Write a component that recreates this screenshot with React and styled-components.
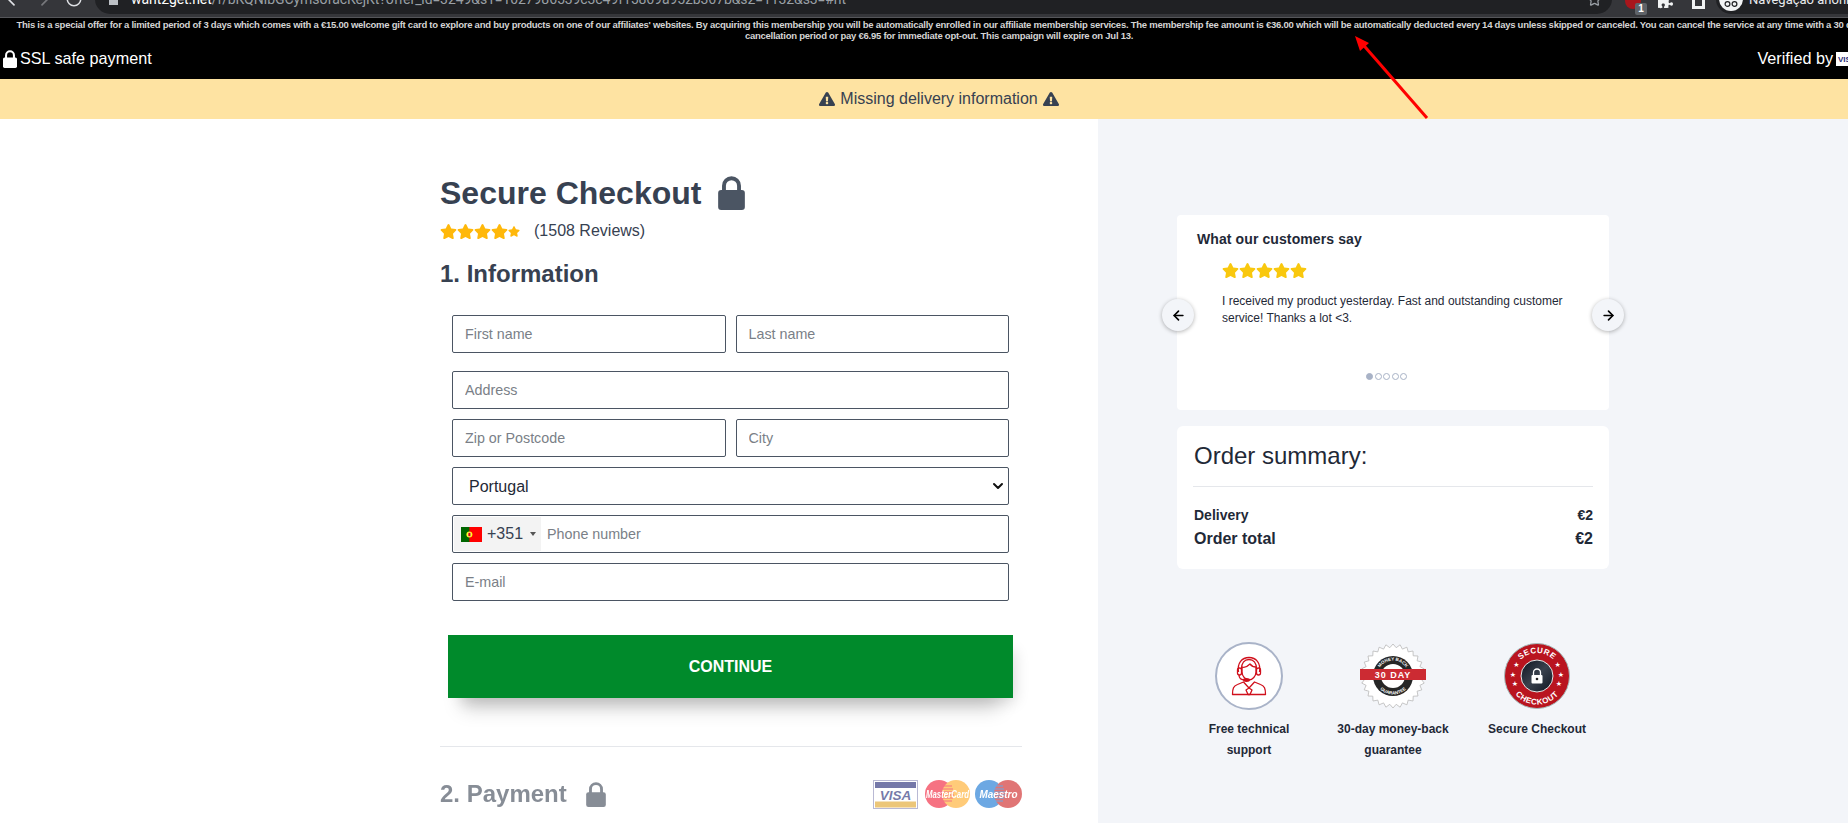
import React from "react"
import styled, { createGlobalStyle } from "styled-components"
import { FaStar, FaExclamationTriangle, FaPuzzlePiece } from "react-icons/fa"
import { ArrowLeft, ArrowRight, RotateCw, Star, ChevronDown } from "lucide-react"

const GlobalStyle = createGlobalStyle`
    html, body {
        margin: 0;
        height: 100%;
        overflow: hidden;
        background: #fff;
    }
    * {
        box-sizing: border-box;
    }
`

// the real page is a bit wider than the window, the right edge gets cut off
const Page = styled.div`
    width: 1878px;
    height: 823px;
    overflow: hidden;
    position: relative;
    font-family: "Liberation Sans", Arial, sans-serif;
    color: #374151;
`

const BrowserBar = styled.div`
    height: 18px;
    background: #35363a;
    border-bottom: 1px solid #55565a;
    display: flex;
    align-items: flex-end;
    overflow: hidden;
    color: #c8c9cc;
    padding-bottom: 3px;
`

const NavButton = styled.div`
    width: 28px;
    height: 26px;
    margin-bottom: 2px;
    margin-left: ${props => props.$push || 0}px;
    flex: none;
    display: flex;
    align-items: center;
    justify-content: center;
    color: ${props => props.$dim ? "#77787c" : "#dfe1e5"};
`

const UrlPill = styled.div`
    width: 1517px;
    height: 30px;
    margin-left: 7px;
    flex: none;
    background: #202124;
    border-radius: 15px;
    display: flex;
    align-items: center;
    padding: 0 10px 0 14px;
    font-size: 14px;
    letter-spacing: -0.08px;
    color: #9aa0a6;
    font-family: "Roboto", sans-serif;
`

const UrlHost = styled.span`
    color: #fff;
`

const UrlLock = styled.span`
    width: 9px;
    height: 12px;
    margin-right: 13px;
    background: #bdc1c6;
    flex: none;
`

const UrlText = styled.span`
    flex: 1;
    white-space: nowrap;
`

const ExtButton = styled.div`
    position: relative;
    width: 33px;
    height: 26px;
    margin-left: ${props => props.$push || 0}px;
    flex: none;
    display: flex;
    align-items: center;
    justify-content: center;
    color: #f1f3f4;
`

const ExtDot = styled.span`
    width: 16px;
    height: 16px;
    border-radius: 50%;
    background: #a8161c;
`

const ExtCount = styled.span`
    position: absolute;
    right: 2px;
    bottom: -1px;
    width: 12px;
    height: 12px;
    background: #5f6368;
    border-radius: 2px;
    color: #fff;
    font-size: 10px;
    font-weight: 700;
    text-align: center;
    line-height: 12px;
`

const ReadingList = styled.span`
    width: 13px;
    height: 15px;
    border: 3px solid #f1f3f4;
    background: #35363a;
`

const IncognitoPill = styled.div`
    width: 160px;
    height: 30px;
    flex: none;
    margin-left: 1px;
    border-radius: 15px;
    background: #202124;
    display: flex;
    align-items: center;
    gap: 6px;
    padding-left: 3px;
    font-family: "Roboto", sans-serif;
    font-size: 13px;
    color: #e8eaed;
    white-space: nowrap;
`

const IncognitoIcon = styled.span`
    width: 24px;
    height: 24px;
    border-radius: 50%;
    background: #f1f3f4;
    flex: none;
    display: flex;
    align-items: flex-end;
    justify-content: center;
    padding-bottom: 4px;
`

const BlackBand = styled.header`
    background: #000;
    height: 61px;
    color: #fff;
    display: flex;
    flex-direction: column;
`

const Disclaimer = styled.p`
    margin: 0;
    padding-top: 2px;
    font-size: 9.5px;
    line-height: 10.5px;
    letter-spacing: -0.25px;
    text-align: center;
    color: #d4d4d4;
    font-weight: 700;
`

const TrustRow = styled.div`
    display: flex;
    justify-content: space-between;
    align-items: center;
    font-size: 16.2px;
    margin-top: 8px;
    padding: 0 2px 0 3px;
`

const TrustItem = styled.span`
    display: flex;
    align-items: center;
    gap: 3px;
`

const AlertBar = styled.div`
    height: 40px;
    background: #fee3a2;
    color: #374151;
    display: flex;
    align-items: center;
    justify-content: center;
    gap: 5px;
    font-size: 16px;
    padding-bottom: 1px;
`

const Columns = styled.div`
    display: grid;
    grid-template-columns: 1098px 1fr;
    height: 704px;
`

const Main = styled.main`
    padding: 56px 76px 0 440px;
    overflow: hidden;
`

const Title = styled.h1`
    margin: 0;
    font-size: 32px;
    line-height: 36px;
    font-weight: 700;
    color: #374151;
    display: flex;
    align-items: center;
    gap: 17px;
`

const RatingRow = styled.div`
    display: flex;
    align-items: center;
    gap: 14px;
    margin-top: 10px;
    font-size: 16px;
    color: #374151;
    height: 20px;
`

const Stars = styled.span`
    display: inline-flex;
    color: ${props => props.$color};
    font-size: ${props => props.$size}px;
`

const HalfStar = styled.span`
    display: inline-flex;
    width: 12px;
    overflow: hidden;
    flex: none;
`

const SectionTitle = styled.h2`
    margin: 17px 0 0;
    font-size: 24px;
    line-height: 32px;
    font-weight: 700;
    color: #374151;
`

const Form = styled.form`
    margin: 25px 13px 0 12px;
    display: flex;
    flex-direction: column;
    gap: 10px;
`

const FormRow = styled.div`
    display: flex;
    gap: 10px;
    margin-bottom: ${props => props.$extra || 0}px;
`

const fieldBox = `
    height: 38px;
    width: 100%;
    min-width: 0;
    border: 1px solid #4b5563;
    border-radius: 2px;
    background: #fff;
    font-family: "Liberation Sans", Arial, sans-serif;
`

const Input = styled.input`
    ${fieldBox}
    padding: 0 12px;
    font-size: 14.3px;
    color: #374151;
    outline: none;

    &::placeholder {
        color: #7a7f87;
        opacity: 1;
    }
`

const SelectWrap = styled.div`
    position: relative;
`

const Select = styled.select`
    ${fieldBox}
    appearance: none;
    padding: 0 16px;
    font-size: 16px;
    color: #1f2937;
`

const SelectArrow = styled.span`
    position: absolute;
    right: 3px;
    top: 11px;
    color: #111;
    display: flex;
    pointer-events: none;
`

const PhoneField = styled.div`
    ${fieldBox}
    display: flex;
    align-items: stretch;
    padding: 1px;
`

const DialCode = styled.div`
    width: 87px;
    flex: none;
    background: #f3f3f3;
    display: flex;
    align-items: center;
    padding-left: 7px;
    font-size: 16px;
    color: #374151;
`

const DialText = styled.span`
    margin-left: 5px;
`

const Caret = styled.span`
    margin-left: 7px;
    border-left: 3px solid transparent;
    border-right: 3px solid transparent;
    border-top: 4px solid #555;
`

const PhoneInput = styled.input`
    flex: 1;
    min-width: 0;
    border: 0;
    outline: none;
    padding: 0 6px;
    font-size: 14.3px;
    font-family: "Liberation Sans", Arial, sans-serif;

    &::placeholder {
        color: #7a7f87;
        opacity: 1;
    }
`

const ContinueButton = styled.button`
    display: block;
    width: 565px;
    height: 63px;
    margin: 34px 0 0 8px;
    border: 0;
    background: #008a2b;
    color: #fff;
    font-family: "Liberation Sans", Arial, sans-serif;
    font-size: 16px;
    font-weight: 700;
    box-shadow: 8px 10px 14px -6px rgba(0, 0, 0, 0.14), 0 24px 20px -14px rgba(0, 0, 0, 0.18);
`

const Rule = styled.hr`
    margin: 48px 0 0;
    border: 0;
    border-top: 1px solid #e5e7eb;
`

const PaymentRow = styled.div`
    display: flex;
    justify-content: space-between;
    align-items: center;
    margin-top: 31px;
    opacity: 0.6;
`

const PaymentTitle = styled.h2`
    margin: 0;
    font-size: 24px;
    line-height: 32px;
    font-weight: 700;
    color: #374151;
    display: flex;
    align-items: center;
    gap: 19px;
`

const CardLogos = styled.div`
    display: flex;
    align-items: center;
    gap: 5px;
`

const VisaWrap = styled.span`
    display: flex;
    margin-right: 2px;
`

const Aside = styled.aside`
    background: #f3f5f9;
    padding: 96px 0 0 79px;
`

const Card = styled.section`
    width: 432px;
    background: #fff;
    border-radius: 4px;
    position: relative;
`

const ReviewCard = styled(Card)`
    height: 195px;
    padding: 16px 20px;
`

const ReviewTitle = styled.h3`
    margin: 0;
    font-size: 14px;
    line-height: 17px;
    font-weight: 700;
    color: #1f2937;
    letter-spacing: 0.1px;
`

const ReviewBody = styled.div`
    margin: 14px 0 0 25px;
`

const ReviewText = styled.p`
    margin: 10px 0 0;
    font-size: 12px;
    line-height: 17px;
    color: #1f2937;
`

const Dots = styled.div`
    position: absolute;
    left: 189px;
    top: 158px;
    display: flex;
    gap: 1.5px;
`

const Dot = styled.span`
    width: 7px;
    height: 7px;
    border-radius: 50%;
    border: 1px solid #a8b2c6;
    background: ${props => props.$active ? "#a8b2c6" : "#fff"};
`

const SlideArrow = styled.button`
    position: absolute;
    top: 84px;
    ${props => props.$side}: -15px;
    width: 32px;
    height: 32px;
    border: 0;
    padding: 0;
    border-radius: 50%;
    background: #f3f5f9;
    box-shadow: 0 1px 4px rgba(0, 0, 0, 0.3);
    color: #000;
    display: flex;
    align-items: center;
    justify-content: center;
`

const OrderCard = styled(Card)`
    margin-top: 16px;
    height: 143px;
    padding: 15px 16px 0 17px;
    border-radius: 6px;
`

const OrderTitle = styled.h3`
    margin: 0 0 15px;
    font-size: 24px;
    line-height: 30px;
    font-weight: 400;
    color: #1f2937;
`

const OrderRule = styled.div`
    border-top: 1px solid #e5e7eb;
    margin-left: -1px;
`

const OrderLine = styled.div`
    display: flex;
    justify-content: space-between;
    font-weight: 700;
    color: #1f2937;
    font-size: ${props => props.$big ? 16 : 14}px;
    line-height: ${props => props.$big ? 20 : 18}px;
    margin-top: ${props => props.$big ? 5 : 19}px;
`

const Badges = styled.div`
    margin-top: 73px;
    display: grid;
    grid-template-columns: repeat(3, 144px);
`

const Badge = styled.div`
    display: flex;
    flex-direction: column;
    align-items: center;
    text-align: center;
    padding: 0 14px;
`

const BadgeLabel = styled.span`
    margin-top: 9px;
    font-size: 12px;
    line-height: 21px;
    font-weight: 700;
    color: #1f2937;
`

const ArrowMark = styled.svg`
    position: absolute;
    left: 1341px;
    top: 26px;
`

function LockIcon({ width, height, color }) {
  return (
    <svg width={width} height={height} viewBox="0 0 22 28" fill={color}>
      <path d="M4.800 13V8a6.200 6.200 0 0 1 12.400 0v5" fill="none" stroke={color} strokeWidth="3.200" />
      <rect y="11.500" width="22" height="16.500" rx="2.500" />
    </svg>
  )
}

function PortugalFlag() {
  return (
    <svg width="21" height="15" viewBox="0 0 21 15">
      <rect width="21" height="15" fill="#f00" />
      <rect width="8.400" height="15" fill="#060" />
      <circle cx="8.400" cy="7.500" r="3" fill="#ff0" />
      <rect x="7" y="5.500" width="2.800" height="4" rx="1" fill="#d00" stroke="#fff" strokeWidth="0.500" />
    </svg>
  )
}

function MiniVisa() {
  return (
    <svg width="40" height="14" viewBox="0 0 40 14">
      <rect width="40" height="14" fill="#fff" />
      <text x="2" y="10" fontFamily="Liberation Sans" fontSize="8" fontWeight="700" fill="#2a2a78">VISA</text>
    </svg>
  )
}

function VisaLogo() {
  return (
    <svg width="45" height="29" viewBox="0 0 45 29">
      <rect x="0.500" y="0.500" width="44" height="28" fill="#fff" stroke="#8a8ab8" />
      <rect x="2" y="2" width="41" height="6" fill="#1a1f71" />
      <rect x="2" y="21.500" width="41" height="6" fill="#e0a020" />
      <text x="22.500" y="19.500" textAnchor="middle" fontFamily="Liberation Sans" fontSize="13.500" fontWeight="700" fontStyle="italic" fill="#1a1f71">VISA</text>
    </svg>
  )
}

function MasterCardLogo() {
  return (
    <svg width="45" height="28" viewBox="0 0 45 28">
      <circle cx="14" cy="14" r="14" fill="#f0142f" />
      <circle cx="31" cy="14" r="14" fill="#ffa820" />
      <g stroke="#f0142f" strokeWidth="1">
        <path d="M18 6h9M17 9h11M16 12h13M16 15h13M17 18h11M18 21h9" />
      </g>
      <text x="22.500" y="18" textAnchor="middle" fontFamily="Liberation Sans" fontSize="10" fontWeight="700" fontStyle="italic" fill="#fff" textLength="43" lengthAdjust="spacingAndGlyphs">MasterCard</text>
    </svg>
  )
}

function MaestroLogo() {
  return (
    <svg width="47" height="28" viewBox="0 0 47 28">
      <circle cx="14" cy="14" r="14" fill="#0a6fd0" />
      <circle cx="33" cy="14" r="14" fill="#cc1a1a" />
      <g stroke="#0a6fd0" strokeWidth="1">
        <path d="M19 6h9M18 9h11M17 12h13M17 15h13M18 18h11M19 21h9" />
      </g>
      <text x="23.500" y="18" textAnchor="middle" fontFamily="Liberation Sans" fontSize="11" fontWeight="700" fontStyle="italic" fill="#fff" textLength="38" lengthAdjust="spacingAndGlyphs">Maestro</text>
    </svg>
  )
}

function SupportIcon() {
  return (
    <svg width="68" height="68" viewBox="0 0 68 68" fill="none">
      <circle cx="34" cy="34" r="33" fill="#fff" stroke="#a9b3c8" strokeWidth="2" />
      <g stroke="#d0101c" strokeWidth="1.300" strokeLinejoin="round">
        <path d="M23.500 30c-1.500-9 3.500-14.500 10.500-14.500S46 21 44.500 30" />
        <path d="M26.500 27c0-6 3-9.500 7.500-9.500s7.500 3.500 7.500 9.500" />
        <rect x="22.500" y="26" width="4" height="7" rx="2" />
        <rect x="41.500" y="26" width="4" height="7" rx="2" />
        <path d="M27 25c3 1 6-1 8-3 1.500 2 4 3 6 3v5c0 4-3.500 8-7 8s-7-4-7-8z" />
        <path d="M24 33c0 3 2 5 6 5" />
        <ellipse cx="31.500" cy="38" rx="2.800" ry="1.300" fill="#d0101c" />
        <path d="M17.500 52.500c0-6 1-8.500 5-10l6-2.500 5.500 6 5.500-6 6 2.500c4 1.500 5 4 5 10z" />
        <path d="M34 46l-3 2 2 4.500h2l2-4.500z" />
      </g>
    </svg>
  )
}

function sealPoints() {
  const pts = []
  for (let i = 0; i < 56; i++) {
    const r = i % 2 === 0 ? 32 : 28.5
    const a = (i / 56) * Math.PI * 2
    pts.push((34 + r * Math.cos(a)).toFixed(1) + "," + (34 + r * Math.sin(a)).toFixed(1))
  }
  return pts.join(" ")
}

function MoneyBackSeal() {
  return (
    <svg width="68" height="68" viewBox="0 0 68 68">
      <polygon points={sealPoints()} fill="#fff" stroke="#b9b9b9" strokeWidth="0.800" />
      <circle cx="34" cy="34" r="20" fill="#262626" />
      <circle cx="34" cy="34" r="12" fill="#fff" />
      <path id="sealTop" d="M18.500 34a15.500 15.500 0 0 1 31 0" fill="none" />
      <path id="sealBottom" d="M15.500 34a18.500 18.500 0 0 0 37 0" fill="none" />
      <text fontFamily="Liberation Sans" fontSize="4.500" fontWeight="700" fill="#fff">
        <textPath href="#sealTop" startOffset="50%" textAnchor="middle">MONEY BACK</textPath>
      </text>
      <text fontFamily="Liberation Sans" fontSize="4.500" fontWeight="700" fill="#fff">
        <textPath href="#sealBottom" startOffset="50%" textAnchor="middle">GUARANTEE</textPath>
      </text>
      <rect x="1" y="27" width="66" height="11" fill="#cc2b33" />
      <text x="34" y="36" textAnchor="middle" fontFamily="Liberation Sans" fontSize="9" fontWeight="700" fill="#fff" letterSpacing="1">30 DAY</text>
    </svg>
  )
}

function SecureBadge() {
  const stars = [[13.3, 22.3], [10, 32.3], [12, 41.7], [54.7, 22.3], [58, 32.3], [56, 41.7]]
  return (
    <svg width="68" height="68" viewBox="0 0 68 68">
      <defs>
        <linearGradient id="lockShine" x1="0" y1="0" x2="1" y2="1">
          <stop offset="0" stopColor="#0d1420" />
          <stop offset="0.500" stopColor="#39414d" />
          <stop offset="1" stopColor="#0d1420" />
        </linearGradient>
      </defs>
      <circle cx="34" cy="34" r="32.500" fill="#b9141f" stroke="#a6bcbc" strokeWidth="1" />
      <circle cx="34" cy="34" r="16" fill="url(#lockShine)" stroke="#e8e8e8" strokeWidth="1" />
      <path id="secureTop" d="M11 34a23 23 0 0 1 46 0" fill="none" />
      <path id="secureBottom" d="M5.500 34a28.500 28.500 0 0 0 57 0" fill="none" />
      <text fontFamily="Liberation Sans" fontSize="8" fontWeight="700" fill="#fff" letterSpacing="0.500">
        <textPath href="#secureTop" startOffset="50%" textAnchor="middle">SECURE</textPath>
      </text>
      <text fontFamily="Liberation Sans" fontSize="8" fontWeight="700" fill="#fff" letterSpacing="0.500">
        <textPath href="#secureBottom" startOffset="50%" textAnchor="middle">CHECKOUT</textPath>
      </text>
      {stars.map(([x, y]) => (
        <text key={x + "-" + y} x={x} y={y + 2.500} textAnchor="middle" fontSize="7" fill="#fff" fontFamily="DejaVu Sans">★</text>
      ))}
      <path d="M30.500 33v-2.500a3.500 3.500 0 0 1 7 0V33" fill="none" stroke="#fff" strokeWidth="1.300" />
      <rect x="28.500" y="33" width="11" height="8.500" rx="1" fill="#fff" />
      <circle cx="34" cy="37" r="1.300" fill="#222" />
    </svg>
  )
}

export default function App() {
  return (
    <Page>
      <GlobalStyle />
      <BrowserBar>
        <NavButton><ArrowLeft size={20} /></NavButton>
        <NavButton $dim><ArrowRight size={20} /></NavButton>
        <NavButton $push={4}><RotateCw size={18} /></NavButton>
        <UrlPill>
          <UrlLock />
          <UrlText>
            <UrlHost>want2get.net</UrlHost>/f/bKQNIbGCymsofacKejKt?offer_id=3249&amp;s1=1027986539c3c49f15869a952b367b&amp;s2=1132&amp;s3=#nt
          </UrlText>
          <Star size={15} />
        </UrlPill>
        <ExtButton $push={4}>
          <ExtDot />
          <ExtCount>1</ExtCount>
        </ExtButton>
        <ExtButton><FaPuzzlePiece size={15} /></ExtButton>
        <ExtButton><ReadingList /></ExtButton>
        <IncognitoPill>
          <IncognitoIcon>
            <svg width="14" height="6" viewBox="0 0 14 6" fill="none" stroke="#202124" strokeWidth="1.200">
              <circle cx="3.500" cy="3" r="2.400" />
              <circle cx="10.500" cy="3" r="2.400" />
            </svg>
          </IncognitoIcon>
          Navegação anônima
        </IncognitoPill>
      </BrowserBar>

      <BlackBand>
        <Disclaimer>
          This is a special offer for a limited period of 3 days which comes with a €15.00 welcome gift card to explore and buy products on one of our affiliates' websites. By acquiring this membership you will be automatically enrolled in our affiliate membership services. The membership fee amount is €36.00 which will be automatically deducted every 14 days unless skipped or canceled. You can cancel the service at any time with a 30 day cancellation period or pay €6.95 for immediate opt-out. This campaign will expire on Jul 13.
        </Disclaimer>
        <TrustRow>
          <TrustItem><LockIcon width={14} height={18} color="#fff" /> SSL safe payment</TrustItem>
          <TrustItem>Verified by <MiniVisa /></TrustItem>
        </TrustRow>
      </BlackBand>

      <AlertBar>
        <FaExclamationTriangle size={16} />
        Missing delivery information
        <FaExclamationTriangle size={16} />
      </AlertBar>

      <Columns>
        <Main>
          <Title>Secure Checkout <LockIcon width={27} height={34} color="#4b5563" /></Title>
          <RatingRow>
            <Stars $color="#ffb80a" $size={17}>
              <FaStar /><FaStar /><FaStar /><FaStar />
              <HalfStar><FaStar /></HalfStar>
            </Stars>
            (1508 Reviews)
          </RatingRow>
          <SectionTitle>1. Information</SectionTitle>
          <Form>
            <FormRow $extra={8}>
              <Input placeholder="First name" />
              <Input placeholder="Last name" />
            </FormRow>
            <Input placeholder="Address" />
            <FormRow>
              <Input placeholder="Zip or Postcode" />
              <Input placeholder="City" />
            </FormRow>
            <SelectWrap>
              <Select defaultValue="Portugal">
                <option>Portugal</option>
              </Select>
              <SelectArrow><ChevronDown size={16} strokeWidth={3} /></SelectArrow>
            </SelectWrap>
            <PhoneField>
              <DialCode>
                <PortugalFlag />
                <DialText>+351</DialText>
                <Caret />
              </DialCode>
              <PhoneInput placeholder="Phone number" />
            </PhoneField>
            <Input placeholder="E-mail" />
          </Form>
          <ContinueButton type="button">CONTINUE</ContinueButton>
          <Rule />
          <PaymentRow>
            <PaymentTitle>2. Payment <LockIcon width={20} height={25} color="#374151" /></PaymentTitle>
            <CardLogos>
              <VisaWrap><VisaLogo /></VisaWrap>
              <MasterCardLogo />
              <MaestroLogo />
            </CardLogos>
          </PaymentRow>
        </Main>

        <Aside>
          <ReviewCard>
            <ReviewTitle>What our customers say</ReviewTitle>
            <ReviewBody>
              <Stars $color="#f9c80e" $size={17}>
                <FaStar /><FaStar /><FaStar /><FaStar /><FaStar />
              </Stars>
              <ReviewText>I received my product yesterday. Fast and outstanding customer service! Thanks a lot &lt;3.</ReviewText>
            </ReviewBody>
            <SlideArrow $side="left"><ArrowLeft size={15} strokeWidth={2.6} /></SlideArrow>
            <SlideArrow $side="right"><ArrowRight size={15} strokeWidth={2.6} /></SlideArrow>
            <Dots>
              <Dot $active /><Dot /><Dot /><Dot /><Dot />
            </Dots>
          </ReviewCard>

          <OrderCard>
            <OrderTitle>Order summary:</OrderTitle>
            <OrderRule />
            <OrderLine><span>Delivery</span><span>€2</span></OrderLine>
            <OrderLine $big><span>Order total</span><span>€2</span></OrderLine>
          </OrderCard>

          <Badges>
            <Badge>
              <SupportIcon />
              <BadgeLabel>Free technical support</BadgeLabel>
            </Badge>
            <Badge>
              <MoneyBackSeal />
              <BadgeLabel>30-day money-back guarantee</BadgeLabel>
            </Badge>
            <Badge>
              <SecureBadge />
              <BadgeLabel>Secure Checkout</BadgeLabel>
            </Badge>
          </Badges>
        </Aside>
      </Columns>

      <ArrowMark width="90" height="96" viewBox="0 0 90 96" fill="none">
        <path d="M86 92 L18 14" stroke="#f00" strokeWidth="3" />
        <path d="M14 10 L28 17 L19 25 Z" fill="#f00" />
      </ArrowMark>
    </Page>
  )
}
